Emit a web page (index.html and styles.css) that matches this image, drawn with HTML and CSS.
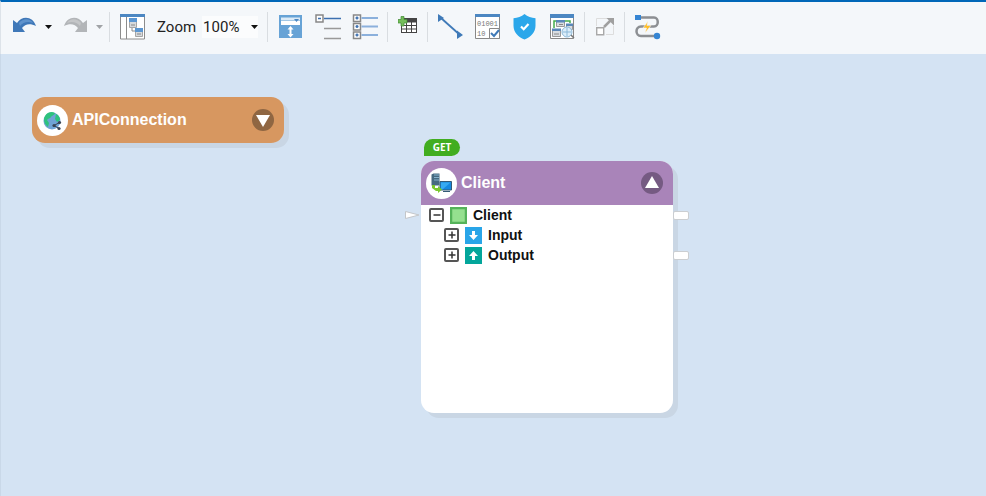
FILE: index.html
```html
<!DOCTYPE html>
<html lang="en">
<head>
  <meta charset="utf-8">
  <meta name="viewport" content="width=device-width">
  <title>API Mapping</title>
  <link rel="stylesheet" href="styles.css">
</head>
<body>
  <div class="toolbar">
    <div class="group history">
      <div class="split">
        <button aria-label="Undo"><svg width="25" height="26" viewBox="0 0 25 26"><path d="M1 6v12h12l-3-4c3-4 8-5 14-2C21 2 10 1 5 9z" fill="#3f78b8"/><path d="M7 9C11 4 18 4 21 9 16 7 11 8 8 12z" fill="#5f93cc"/></svg></button>
        <button aria-label="Undo list"><svg width="7" height="4" viewBox="0 0 7 4"><path d="M0 0h7L3.500 4z" fill="#111"/></svg></button>
      </div>
      <div class="split">
        <button aria-label="Redo"><svg width="25" height="26" viewBox="0 0 25 26"><path d="M24 6v12H12l3-4C12 10 7 9 1 12 4 2 15 1 20 9z" fill="#b2b5b8"/><path d="M18 9C14 4 7 4 4 9 9 7 14 8 17 12z" fill="#c4c6c8"/></svg></button>
        <button aria-label="Redo list"><svg width="7" height="4" viewBox="0 0 7 4"><path d="M0 0h7L3.500 4z" fill="#a0a3a6"/></svg></button>
      </div>
    </div>
    <div class="group">
      <button aria-label="Overview">
        <svg width="26" height="26" viewBox="0 0 26 26"><path d="M.500 1h24v24H.500z" fill="#fff" stroke="#8c8c8c"/><path d="M0 0h25v3H0z" fill="#4c87c2"/><path d="M6.500 3v22" stroke="#8c8c8c"/><path d="M9.500 5.500h7v8h-7zM15.500 14.500h7v8h-7z" fill="#d6d9dc" stroke="#a5a5a5"/><path d="M9 4h8v4H9zM15 14h8v4h-8z" fill="#5a96d2"/><path d="M11 11h4M17 20h4M12 14v3h3" fill="none" stroke="#888"/></svg>
      </button>
      <div class="zoom">
        <label for="zoom">Zoom</label>
        <div class="select-box">
          <select id="zoom"><option>100%</option></select>
          <svg class="select-arrow" width="7" height="4" viewBox="0 0 7 4"><path d="M0 0h7L3.500 4z" fill="#111"/></svg>
        </div>
      </div>
    </div>
    <div class="group">
      <button aria-label="Fit height">
        <svg width="26" height="26" viewBox="0 0 26 26"><path d="M1 1h23v23H1z" fill="#67a3d6"/><path d="M3 3.500h19v3H3z" fill="#dcebf7"/><path d="M3 7h19v4H3z" fill="#fff"/><path d="M16 5h5l-2.500 3z" fill="#4c87c2"/><path d="M12.500 14v8" stroke="#fff" stroke-width="2"/><path d="M9.500 15.500l3-3.500 3 3.500zM9.500 20l3 3.500 3-3.500z" fill="#fff"/></svg>
      </button>
      <button aria-label="Collapse tree">
        <svg width="26" height="26" viewBox="0 0 26 26"><path d="M1 1h7v7H1z" fill="#fff" stroke="#888" stroke-width="1.500"/><path d="M3 4.500h3M9 4.500h17" stroke="#3d70b0" stroke-width="1.500"/><path d="M9 14.500h17M9 24.500h17" stroke="#999" stroke-width="1.500"/></svg>
      </button>
      <button aria-label="Expand tree">
        <svg width="26" height="26" viewBox="0 0 26 26"><path d="M1.500 1h7v6.500h-7zM1.500 9.500h7V16h-7zM1.500 18h7v6.500h-7z" fill="#fff" stroke="#888" stroke-width="1.500"/><path d="M3.500 4h3m-1.500-1.500v3M3.500 12.500h3M5 11v3M3.500 21h3M5 19.500v3" stroke="#3d70b0" stroke-width="1.500"/><path d="M9.500 4H26M9.500 12.500H26M9.500 21H26" stroke="#8bb0dc" stroke-width="2"/></svg>
      </button>
    </div>
    <div class="group">
      <button aria-label="Add table">
        <svg width="20" height="26" viewBox="0 0 20 26"><path d="M3 4h16v15H3z" fill="#444"/><path d="M4 8.500h4v2.500H4zM9 8.500h4v2.500H9zM14 8.500h4v2.500h-4zM4 12h4v2.500H4zM9 12h4v2.500H9zM14 12h4v2.500h-4zM4 15.500h4V18H4zM9 15.500h4V18H9zM14 15.500h4V18h-4z" fill="#fff"/><path d="M3 2.500h3v3h3V9H6v3H3V9H0V5.500h3z" fill="#74bd5a" stroke="#408a34" stroke-width=".7"/></svg>
      </button>
    </div>
    <div class="group">
      <button aria-label="Connect">
        <svg width="26" height="26" viewBox="0 0 26 26"><path d="M3 4l19 17" stroke="#3f7ab8" stroke-width="1.800"/><path d="M0 0v8l6-4zM25 21l-6-4.500V25z" fill="#3f7ab8"/></svg>
      </button>
      <button aria-label="Validate data">
        <svg width="26" height="26" viewBox="0 0 26 26"><path d="M.500 1h24v23.500H.500z" fill="#fff" stroke="#888"/><path d="M0 0h25v3H0z" fill="#4c87c2"/><text class="bits" x="2" y="12">01001</text><text class="bits" x="2" y="22">10</text><path d="M14.500 14.500h10v10h-10z" fill="#fff" stroke="#888"/><path d="M16 19l3 3 5-6" fill="none" stroke="#3f7ab8" stroke-width="2"/></svg>
      </button>
      <button aria-label="Security">
        <svg width="26" height="26" viewBox="0 0 26 26"><path d="M12.500 0c3 2.500 7 4 11 4.200v7.500c0 6.500-4.500 11-11 13.800C6 22.700 1.500 18.200 1.500 11.700V4.200C5.500 4 9.500 2.500 12.500 0z" fill="#2ba7ea"/><path d="M9 12.500l2.700 2.700 4.800-5.200" fill="none" stroke="#fff" stroke-width="2.200"/></svg>
      </button>
      <button aria-label="Preview service">
        <svg width="26" height="26" viewBox="0 0 26 26"><path d="M1.500 1h23v23.500h-23z" fill="#fff" stroke="#888"/><path d="M1 0h24v4H1z" fill="#4c87c2"/><path d="M5 14V7h2M16 7h5v2" fill="none" stroke="#43ad4c" stroke-width="1.500"/><path d="M7.500 6.500h8v6h-8zM3.500 15.500h8v7h-8zM17.500 10.500h6v5h-6z" fill="#d9dde1" stroke="#999"/><path d="M7 6h9v2.500H7zM3 14.500h9V17H3zM17 9.500h7V12h-7z" fill="#5a87b8"/><path d="M5 20h5M10 10.500h4" stroke="#888"/><circle cx="18" cy="18" r="5" fill="#dceefa" stroke="#8bb8d8"/><path d="M14 18h8M18 14v8" fill="none" stroke="#8bb8d8"/><path d="M22 21l3 3" stroke="#777" stroke-width="1.500"/></svg>
      </button>
    </div>
    <div class="group">
      <button aria-label="Enlarge" disabled>
        <svg width="20" height="26" viewBox="0 0 20 26"><path d="M1.500 12V4.500H12M18.500 12v8.500H11" fill="none" stroke="#ddd"/><path d="M1.700 13.700h7v7h-7z" fill="#fff" stroke="#a9a9a9" stroke-width="1.400"/><path d="M9 13l7-7" stroke="#a0a0a0" stroke-width="2.500"/><path d="M11.500 4H19v7.500z" fill="#a0a0a0"/></svg>
      </button>
    </div>
    <div class="group">
      <button aria-label="Flow">
        <svg width="26" height="26" viewBox="0 0 26 26"><path d="M5 3.500h14c5 0 5 9 0 9H6c-6 0-6 9.500 0 9.500h14" fill="none" stroke="#8c8f93" stroke-width="2.500"/><path d="M0 1h6v5H0z" fill="#3585d3"/><circle cx="22" cy="22" r="3.200" fill="#3585d3"/><path d="M13 7l-5 7h3.500L10 19l6-7.500h-4z" fill="#ffbd25" stroke="#f4f7fa" stroke-width=".6"/></svg>
      </button>
    </div>
  </div>

  <main class="canvas">
    <section class="node node-connection">
      <header class="node-header">
        <span class="node-icon">
          <svg width="31" height="31" viewBox="0 0 31 31"><circle cx="15" cy="16" r="8.500" fill="#6fa3d5"/><path d="M8 11c2-4 7-5 10-3-1 3-3 2-4 4s-3 1-4 3l2 3-1 4c-4-3-5-8-3-11zM19 9c3 1 4 4 4 6l-3 2-2-3z" fill="#2ec27e"/><path d="M22.500 17.500L17 20.500l5 3" fill="none" stroke="#374151" stroke-width="1"/><circle cx="22.500" cy="17.500" r="1.600" fill="#374151"/><circle cx="17" cy="20.500" r="1.600" fill="#374151"/><circle cx="22" cy="23.500" r="1.600" fill="#374151"/></svg>
        </span>
        <h2>APIConnection</h2>
        <button class="toggle" aria-label="Expand APIConnection"><svg width="22" height="22" viewBox="0 0 22 22"><path d="M4 6h14l-7 12z" fill="#fff"/></svg></button>
      </header>
    </section>

    <section class="node node-client">
      <span class="method">GET</span>
      <header class="node-header">
        <span class="node-icon">
          <svg width="31" height="31" viewBox="0 0 31 31"><path d="M5.500 6.500l2-1h6v12h-8z" fill="#466a80"/><path d="M8 7h5M8 9.500h5M8 12h5" stroke="#85b2cd"/><path d="M14 13.500h11.500V22H14z" fill="#1689e0" stroke="#345a76"/><path d="M15 14.500h9.500l-8 7H15z" fill="#36aaf2"/><path d="M17 23.500h7" stroke="#345a76"/><path d="M6 17h3v3h3v-2l4 3.500-4 3.500v-2h-2l-4-3z" fill="#7ac82f"/></svg>
        </span>
        <h2>Client</h2>
        <button class="toggle" aria-label="Collapse Client"><svg width="22" height="22" viewBox="0 0 22 22"><path d="M4 16h14L11 4z" fill="#fff"/></svg></button>
      </header>
      <ul class="tree">
        <li>
          <div class="row">
            <svg class="port-in" width="15" height="8" viewBox="0 0 15 8"><path d="M.500.500v7L14 4z" fill="#fff" stroke="#c3c6c9"/></svg>
            <button class="expander" aria-label="Collapse"><svg width="14" height="14" viewBox="0 0 14 14"><path d="M3.500 7h7" stroke="#333" stroke-width="1.500"/></svg></button>
            <svg width="17" height="17" viewBox="0 0 17 17"><path d="M1 1h15v15H1z" fill="#95e08f" stroke="#55b35a" stroke-width="2.500"/></svg>
            <span>Client</span>
            <i class="port-out"></i>
          </div>
          <ul>
            <li class="row">
              <button class="expander" aria-label="Expand"><svg width="14" height="14" viewBox="0 0 14 14"><path d="M3.500 7h7M7 3.500v7" stroke="#333" stroke-width="1.500"/></svg></button>
              <svg width="17" height="17" viewBox="0 0 17 17"><path d="M0 0h17v17H0z" fill="#29a5e8"/><path d="M7 4h3v4h3l-4.500 5L4 8h3z" fill="#fff"/></svg>
              <span>Input</span>
            </li>
            <li class="row">
              <button class="expander" aria-label="Expand"><svg width="14" height="14" viewBox="0 0 14 14"><path d="M3.500 7h7M7 3.500v7" stroke="#333" stroke-width="1.500"/></svg></button>
              <svg width="17" height="17" viewBox="0 0 17 17"><path d="M0 0h17v17H0z" fill="#03a69b"/><path d="M7 13h3V9h3L8.500 4 4 9h3z" fill="#fff"/></svg>
              <span>Output</span>
              <i class="port-out"></i>
            </li>
          </ul>
        </li>
      </ul>
    </section>
  </main>
</body>
</html>
```

FILE: styles.css
```css
* {
  box-sizing: border-box;
}

body {
  margin: 0;
  min-height: 100vh;
  display: flex;
  flex-direction: column;
  font-family: "Liberation Sans", Arial, sans-serif;
  background-color: #d4e3f3;
}

button {
  display: flex;
  padding: 0;
  border: 0;
  background: none;
}

svg {
  display: block;
  flex-shrink: 0;
}

h2 {
  margin: 0;
}

.toolbar {
  display: flex;
  align-items: center;
  height: 54px;
  padding-bottom: 2px;
  border-top: 2px solid #0067b8;
  border-left: 1px solid #dde3e9;
  background-color: #f4f7fa;
}

.group {
  display: flex;
  align-items: center;
  gap: 11px;
  height: 30px;
  padding: 0 9px 0 10px;
  border-right: 1px solid #d9dde1;
}

.group:last-child {
  border-right: 0;
}

.history {
  padding: 0 6px 0 11px;
}

.split {
  display: flex;
  align-items: center;
  gap: 8px;
}

.zoom {
  display: flex;
  align-items: center;
  gap: 6px;
  font-family: Roboto, sans-serif;
  font-size: 15px;
  color: #222;
}

.select-box {
  position: relative;
}

.zoom select {
  display: block;
  appearance: none;
  width: 56px;
  height: 22px;
  padding: 0 0 0 1px;
  border: 0;
  background-color: #fbfcfd;
  font: inherit;
  color: inherit;
}

.select-arrow {
  position: absolute;
  top: 9px;
  right: 0;
  pointer-events: none;
}

.bits {
  font: 7px "Liberation Mono", monospace;
  fill: #777;
}

.canvas {
  position: relative;
  flex: 1;
  border-left: 1px solid #c9d8e8;
}

.node {
  position: absolute;
  width: 252px;
  border-radius: 13px;
  box-shadow: 5px 5px 0 #c9d6e4;
}

.node-header {
  display: flex;
  align-items: center;
  gap: 4px;
  height: 44px;
  padding: 0 10px 0 5px;
  border-radius: 13px 13px 0 0;
  color: #fff;
}

.node-header h2 {
  flex: 1;
  font-size: 16px;
}

.node-icon {
  border-radius: 50%;
  background-color: #fff;
}

.toggle {
  border-radius: 50%;
}

.node-connection {
  left: 31px;
  top: 43px;
}

.node-connection .node-header {
  height: 46px;
  border-radius: 13px;
  background-color: #d79760;
}

.node-connection .toggle {
  background-color: #8f6642;
}

.node-client {
  left: 420px;
  top: 107px;
  min-height: 252px;
  background-color: #fff;
}

.node-client .node-header {
  background-color: #a984b9;
}

.node-client .toggle {
  background-color: #755a82;
}

.method {
  position: absolute;
  left: 3px;
  top: -22px;
  width: 36px;
  border-radius: 9px 9px 9px 0;
  background-color: #41ad20;
  color: #fff;
  font: bold 10px/17px "Open Sans", sans-serif;
  text-align: center;
}

.tree,
.tree ul {
  margin: 0;
  padding: 0;
  list-style: none;
}

.tree ul .row {
  padding-left: 23px;
}

.row {
  position: relative;
  display: flex;
  align-items: center;
  gap: 6px;
  height: 20px;
  padding-left: 8px;
  font-size: 14px;
  font-weight: bold;
  color: #111;
}

.expander {
  width: 15px;
  height: 14px;
  justify-content: center;
  align-items: center;
  border: 2px solid #555;
  border-radius: 2px;
}

/* connection ports on the node edges */
.port-in {
  position: absolute;
  left: -16px;
  top: 6px;
}

.port-out {
  position: absolute;
  right: -16px;
  top: 6px;
  width: 16px;
  height: 9px;
  border: 1px solid #cbced1;
  border-radius: 2px;
  background-color: #fff;
}
```
